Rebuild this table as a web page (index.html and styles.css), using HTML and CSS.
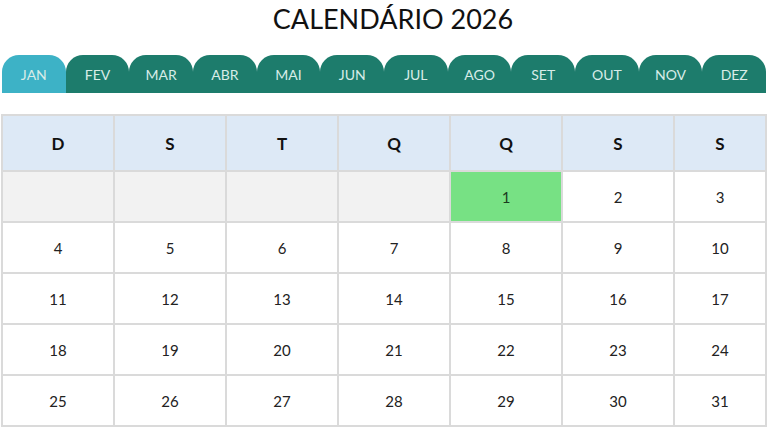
FILE: index.html
```html
<!DOCTYPE html>
<html lang="pt">
<head>
<meta charset="utf-8">
<title>Calendário 2026</title>
<link rel="stylesheet" href="styles.css">
</head>
<body>
<h1 class="title">CALENDÁRIO 2026</h1>
<nav class="tabs">
  <div class="tab active">JAN</div>
  <div class="tab">FEV</div>
  <div class="tab">MAR</div>
  <div class="tab">ABR</div>
  <div class="tab">MAI</div>
  <div class="tab">JUN</div>
  <div class="tab">JUL</div>
  <div class="tab">AGO</div>
  <div class="tab">SET</div>
  <div class="tab">OUT</div>
  <div class="tab">NOV</div>
  <div class="tab">DEZ</div>
</nav>
<div class="cal">
  <div class="head">D</div><div class="head">S</div><div class="head">T</div><div class="head">Q</div><div class="head">Q</div><div class="head">S</div><div class="head">S</div>
  <div class="day empty"></div><div class="day empty"></div><div class="day empty"></div><div class="day empty"></div><div class="day today">1</div><div class="day">2</div><div class="day">3</div>
  <div class="day">4</div><div class="day">5</div><div class="day">6</div><div class="day">7</div><div class="day">8</div><div class="day">9</div><div class="day">10</div>
  <div class="day">11</div><div class="day">12</div><div class="day">13</div><div class="day">14</div><div class="day">15</div><div class="day">16</div><div class="day">17</div>
  <div class="day">18</div><div class="day">19</div><div class="day">20</div><div class="day">21</div><div class="day">22</div><div class="day">23</div><div class="day">24</div>
  <div class="day">25</div><div class="day">26</div><div class="day">27</div><div class="day">28</div><div class="day">29</div><div class="day">30</div><div class="day">31</div>
</div>
</body>
</html>
```
FILE: styles.css
```css
html, body {
  margin: 0;
  padding: 0;
  background: #ffffff;
}
body {
  width: 768px;
  height: 432px;
  overflow: hidden;
  font-family: Lato, "Open Sans", sans-serif;
  color: #1f1f1f;
}
.title {
  margin: 0;
  height: 38px;
  padding: 2px 0 0 18px;
  box-sizing: border-box;
  text-align: center;
  font-weight: 400;
  font-size: 27px;
  line-height: 34px;
  color: #111;
}
.tabs {
  display: flex;
  margin: 17px 2px 0 2px;
  height: 38px;
}
.tab {
  flex: 1;
  background: #1d7c6c;
  color: #d8ece8;
  border-radius: 17px 17px 0 0;
  display: flex;
  align-items: center;
  justify-content: center;
  font-size: 14px;
  padding-top: 1px;
}
.tab.active {
  background: #3db2c6;
}
.cal {
  margin: 21px 0 0 1px;
  width: 766px;
  box-sizing: border-box;
  padding: 2px;
  background: #dadada;
  display: grid;
  grid-template-columns: repeat(6, 110px) 90px;
  grid-template-rows: 54px repeat(5, 49px);
  gap: 2px;
}
.head {
  background: #dde9f6;
  display: flex;
  align-items: center;
  justify-content: center;
  font-weight: 700;
  font-size: 17px;
  color: #111;
}
.day {
  background: #ffffff;
  display: flex;
  align-items: center;
  justify-content: center;
  font-size: 15px;
  color: #222;
}
.day.empty {
  background: #f2f2f2;
}
.day.today {
  background: #77e184;
  color: #1b3b1f;
}
```
